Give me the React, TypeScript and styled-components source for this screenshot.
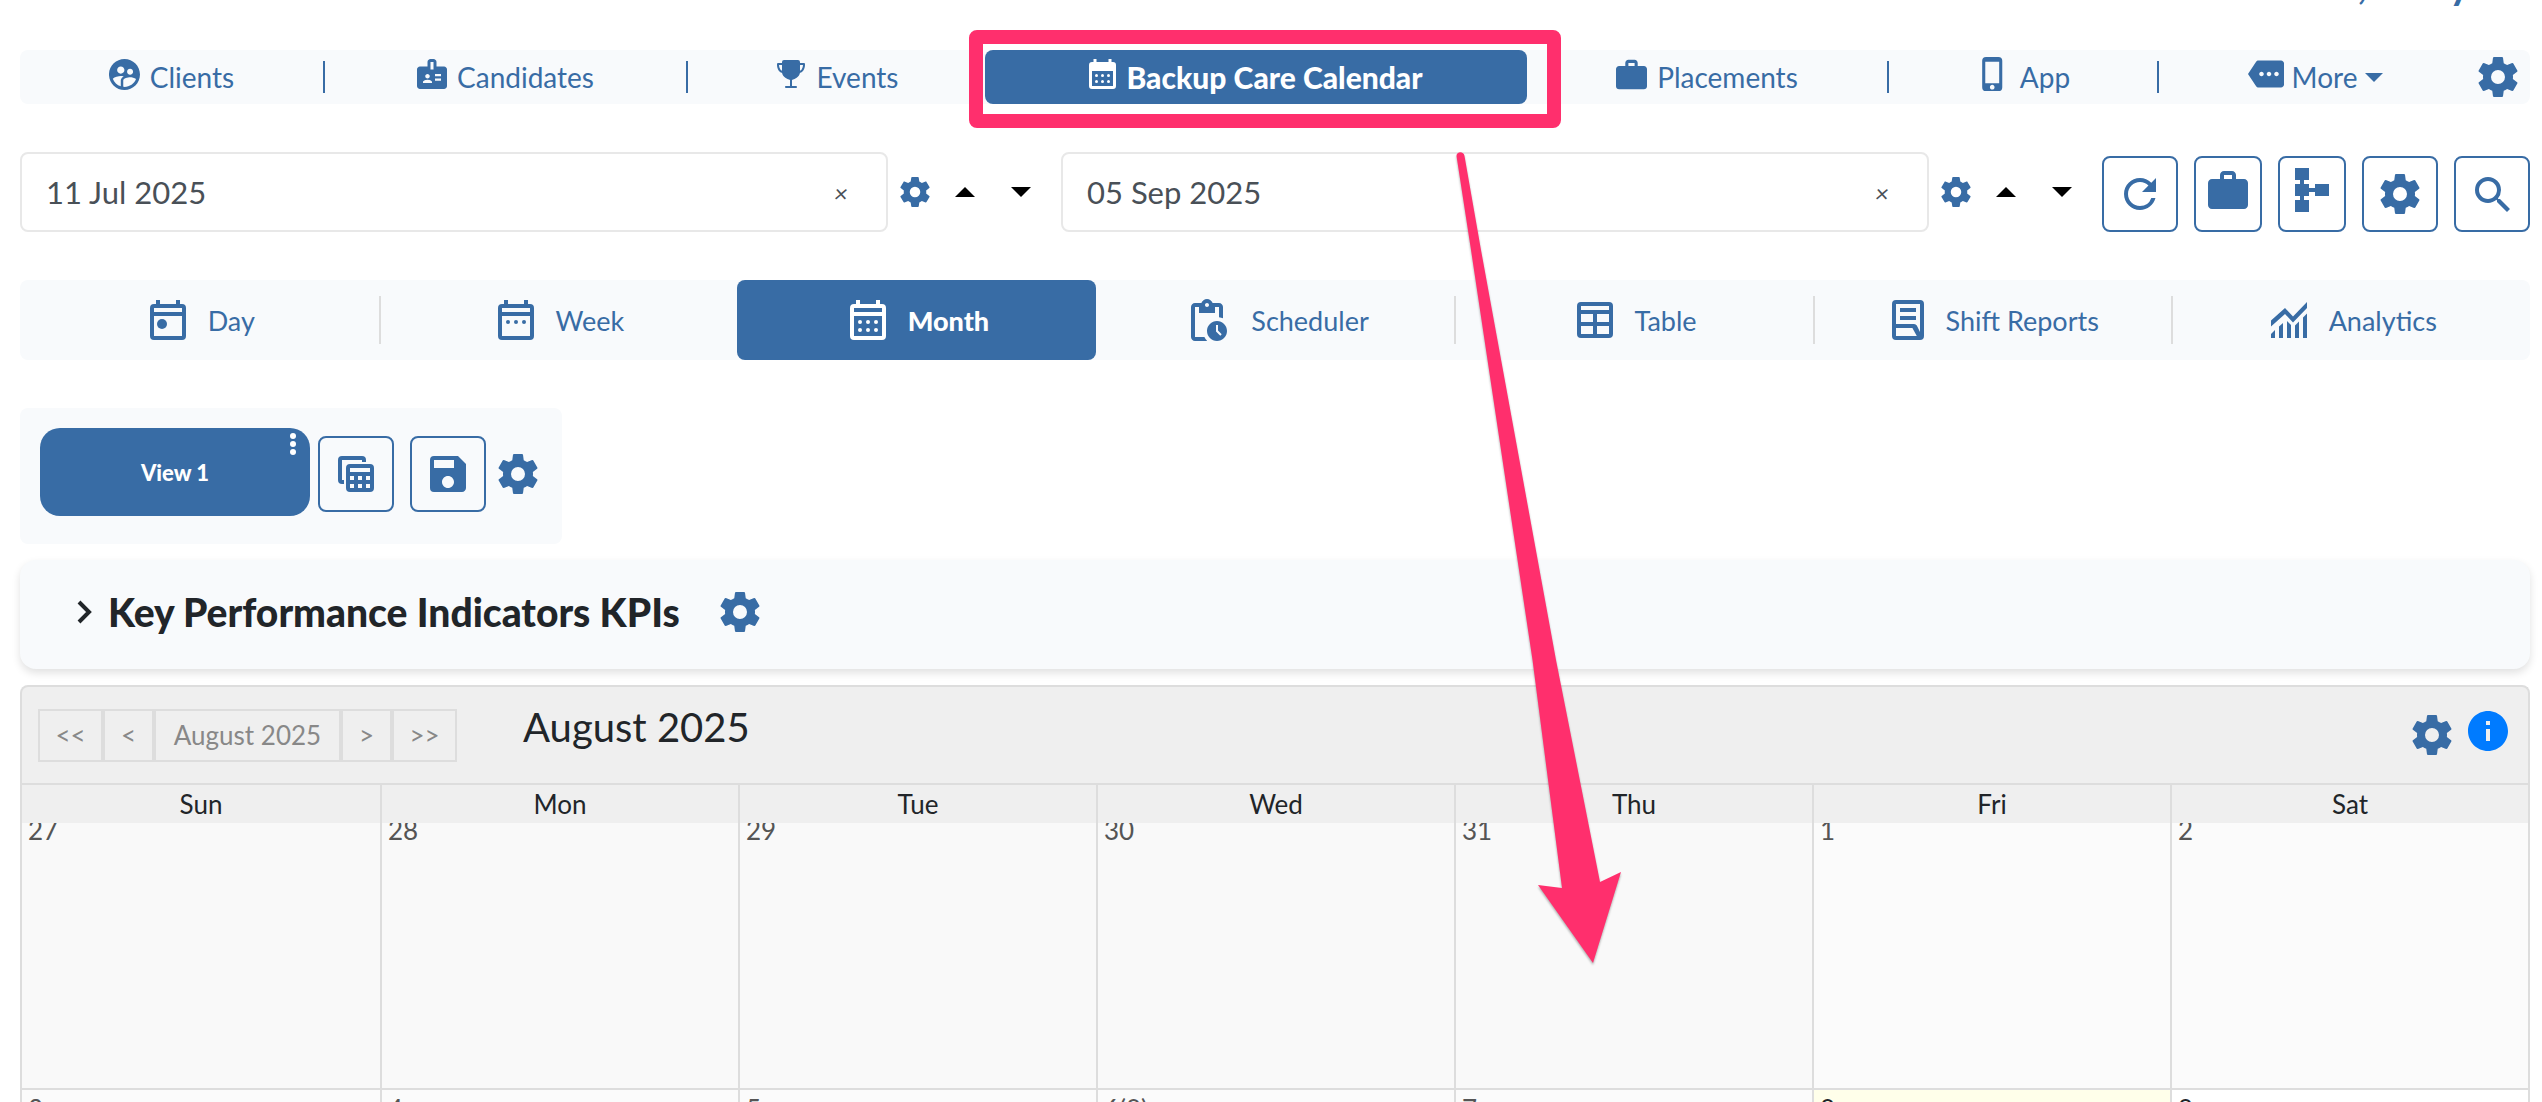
import React, { useEffect, useRef } from 'react';
import styled, { createGlobalStyle, css } from 'styled-components';
import {
  MdBadge,
  MdInfo,
  MdMore,
  MdOutlinePendingActions,
  MdPhoneIphone,
  MdRefresh,
  MdSave,
  MdSearch,
  MdSupervisedUserCircle,
  MdWork,
} from 'react-icons/md';
import { IoTrophy } from 'react-icons/io5';

const blue = '#386ca5';
const panel = '#f8fafc';
const line = '#dddddd';
const pink = '#ff2f6d';

const GlobalStyle = createGlobalStyle`
  * { box-sizing: border-box; }
  body {
    margin: 0;
    background: #fff;
    color: #212529;
    font-family: Lato, "Liberation Sans", sans-serif;
    font-size: 27px;
    overflow: hidden;
  }
  button, input { font: inherit; color: inherit; }
  svg { display: block; flex: none; }
`;

/* ---------- icons ---------- */

const Gear = ({ size = 40 }: { size?: number }) => (
  <svg width={size} height={size} viewBox="2 2 20 20" fill={blue} aria-hidden="true">
    <path d="M12 15.5A3.5 3.5 0 0 1 8.5 12 3.5 3.5 0 0 1 12 8.5a3.5 3.5 0 0 1 3.5 3.5 3.5 3.5 0 0 1-3.5 3.5m7.43-2.53c.04-.32.07-.64.07-.97s-.03-.66-.07-1l2.11-1.63c.19-.15.24-.42.12-.64l-2-3.46c-.12-.22-.39-.31-.61-.22l-2.49 1c-.52-.39-1.06-.73-1.69-.98l-.37-2.65A.506.506 0 0 0 14 2h-4c-.25 0-.46.18-.5.42l-.37 2.65c-.63.25-1.17.59-1.69.98l-2.49-1c-.22-.09-.49 0-.61.22l-2 3.46c-.13.22-.07.49.12.64L4.57 11c-.04.34-.07.67-.07 1s.03.65.07.97l-2.11 1.66c-.19.15-.25.42-.12.64l2 3.46c.12.22.39.3.61.22l2.49-1.01c.52.4 1.06.74 1.69.99l.37 2.65c.04.24.25.42.5.42h4c.25 0 .46-.18.5-.42l.37-2.65c.63-.26 1.17-.59 1.69-.99l2.49 1.01c.22.08.49 0 .61-.22l2-3.46c.12-.22.07-.49-.12-.64l-2.11-1.66Z" />
  </svg>
);

const CALENDAR_TABS = 'M16 0h-1v-2h-2v2H5v-2H3v2H2a2 2 0 0 0-2 2v14a2 2 0 0 0 2 2h14a2 2 0 0 0 2-2V2a2 2 0 0 0-2-2z';

const CalendarIcon = ({ kind, solid, w = 36, h = 40 }: { kind: 'day' | 'week' | 'month'; solid?: boolean; w?: number; h?: number }) => (
  <svg width={w} height={h} viewBox="0 -2 18 20" fill="currentColor" aria-hidden="true">
    <path fillRule="evenodd" d={`${CALENDAR_TABS}M16 16H2V6h14z${solid ? '' : 'M16 4H2V2h14z'}`} />
    {kind === 'day' && <circle cx="6" cy="10" r="2.5" />}
    {kind !== 'day' && [5, 9, 13].map((x) => <circle key={x} cx={x} cy="9" r="1" />)}
    {kind === 'month' && [5, 9, 13].map((x) => <circle key={x} cx={x} cy="13" r="1" />)}
  </svg>
);

const TableIcon = () => (
  <svg width="36" height="36" viewBox="0 0 18 18" fill="currentColor" aria-hidden="true">
    <path fillRule="evenodd" d="M2 0h14a2 2 0 0 1 2 2v14a2 2 0 0 1-2 2H2a2 2 0 0 1-2-2V2a2 2 0 0 1 2-2zM2 2v2h14V2zM2 6v4h6V6zM10 6v4h6V6zM2 12v4h6v-4zM10 12v4h6v-4z" />
  </svg>
);

const ReportIcon = () => (
  <svg width="32" height="40" viewBox="0 0 16 20" fill="currentColor" aria-hidden="true">
    <path fillRule="evenodd" d="M2 0h12a2 2 0 0 1 2 2v16a2 2 0 0 1-2 2H2a2 2 0 0 1-2-2V2a2 2 0 0 1 2-2zM2 2v10h9q1 0 1.4.8L14 16V2zM2 14v4h10.4L10.2 14z" />
    <path d="M4 4h8v2H4zM4 8h8v2H4z" />
  </svg>
);

const AnalyticsIcon = () => (
  <svg width="36" height="36" viewBox="0 0 18 18" fill="currentColor" aria-hidden="true">
    <path d="M0 9.2 7 3l4 4.300L18 0v3l-7 7.200-4-4.200-7 6.200z" />
    <path d="M0 16l2-2v4H0zM4 12.300l2-1.800V18H4zM8 9.500l2 2V18H8zM12 11.700l2-2V18h-2zM16 7.700l2-2V18h-2z" />
  </svg>
);

const CopyTableIcon = () => (
  <svg width="36" height="36" viewBox="0 0 18 18" fill="currentColor" aria-hidden="true">
    <path d="M0 2a2 2 0 0 1 2-2h10a2 2 0 0 1 2 2v1h-2V2H2v10h1v2H2a2 2 0 0 1-2-2z" />
    <path fillRule="evenodd" d="M6 4h10a2 2 0 0 1 2 2v10a2 2 0 0 1-2 2H6a2 2 0 0 1-2-2V6a2 2 0 0 1 2-2zM6 6v2h10V6zM6 10v2h2v-2zM10 10v2h2v-2zM14 10v2h2v-2zM6 14v2h2v-2zM10 14v2h2v-2zM14 14v2h2v-2z" />
  </svg>
);

const TreeIcon = () => (
  <svg width="34" height="44" viewBox="0 0 34 44" fill="currentColor" aria-hidden="true">
    <path d="M0 0h14v12H9v4h5v4h6v-4h14v12H20v-4h-6v4H9v4h5v12H0V32h5v-4H0V16h5v-4H0z" />
  </svg>
);

const Triangle = ({ down, w = 20, h = 10, color = '#000' }: { down?: boolean; w?: number; h?: number; color?: string }) => (
  <svg width={w} height={h} viewBox="0 0 20 10" preserveAspectRatio="none" fill={color} aria-hidden="true">
    <path d={down ? 'M0 0h20L10 10z' : 'M0 10h20L10 0z'} />
  </svg>
);

/* ---------- page ---------- */

const Page = styled.div`
  height: 100vh;
  display: flex;
  flex-direction: column;
  padding: 0 12px 0 20px;
  overflow: hidden;
`;

const Greeting = styled.header`
  flex: none;
  display: flex;
  align-items: flex-start;
  justify-content: flex-end;
  gap: 82px;
  height: 50px;
  padding-right: 60px;
  overflow: hidden;
  color: ${blue};
  font-size: 40px;
  font-weight: 700;
  line-height: 40px;
  span { margin-top: -36px; }
`;

const Nav = styled.nav`
  flex: none;
  display: flex;
  height: 54px;
  border-radius: 8px;
  background: ${panel};
`;

const NavItem = styled.div<{ $share: number; $divider?: boolean }>`
  position: relative;
  flex: ${(p) => p.$share} 1 0;
  display: flex;
  align-items: center;
  ${(p) =>
    p.$divider &&
    css`
      &::after {
        content: '';
        width: 2px;
        height: 32px;
        background: ${blue};
      }
    `}
`;

const NavLink = styled.a<{ $active?: boolean; $tight?: boolean }>`
  flex: 1;
  display: flex;
  align-items: center;
  justify-content: center;
  gap: ${(p) => (p.$tight ? 8 : 10)}px;
  padding-right: ${(p) => (p.$tight ? 6 : 0)}px;
  height: 100%;
  color: ${blue};
  font-size: 28px;
  text-decoration: none;
  white-space: nowrap;
  > svg:first-child { margin-bottom: 6px; }
  ${(p) =>
    p.$active &&
    css`
      background: ${blue};
      color: #fff;
      border-radius: 8px;
      font-size: 30px;
      font-weight: 900;
    `}
`;

const PlainButton = styled.button`
  flex: none;
  display: flex;
  align-items: center;
  justify-content: center;
  padding: 0;
  border: 0;
  background: none;
  color: #000;
`;

const NavGear = styled(PlainButton)`
  margin-right: 12px;
`;

const Highlight = styled.div`
  position: absolute;
  z-index: 5;
  inset: -20px -34px -24px -16px;
  border: 14px solid ${pink};
  border-radius: 8px;
  pointer-events: none;
`;

const Pointer = styled.svg`
  position: absolute;
  z-index: 6;
  left: 470px;
  top: 100px;
  filter: drop-shadow(0 2px 1px rgba(0, 0, 0, 0.3));
  pointer-events: none;
`;

const FilterRow = styled.div`
  flex: none;
  display: flex;
  align-items: center;
  margin-top: 48px;
`;

const DateGroup = styled.div`
  flex: 1;
  display: flex;
  align-items: center;
  padding-right: 30px;
`;

const DateBox = styled.div`
  flex: 1;
  display: flex;
  align-items: center;
  height: 80px;
  margin-right: 12px;
  padding: 0 38px 0 24px;
  border: 2px solid #e8e8e8;
  border-radius: 8px;
  color: #495057;
`;

const DateInput = styled.input`
  flex: 1;
  min-width: 0;
  padding: 0;
  border: 0;
  outline: 0;
  background: none;
  font-size: 31px;
`;

const ClearButton = styled(PlainButton)`
  color: #495057;
  font-size: 24px;
  font-style: italic;
`;

const Steps = styled.div`
  display: flex;
  gap: 36px;
  margin-left: 25px;
`;

const ToolGroup = styled.div`
  display: flex;
  gap: 16px;
  padding-top: 4px;
`;

const ToolButton = styled.button<{ $narrow?: boolean }>`
  flex: none;
  display: flex;
  align-items: center;
  justify-content: center;
  width: ${(p) => (p.$narrow ? 68 : 76)}px;
  height: 76px;
  padding: 0 0 ${(p) => (p.$narrow ? 8 : 0)}px;
  border: 2px solid ${blue};
  border-radius: 8px;
  background: transparent;
  color: ${blue};
`;

const Tabs = styled.div`
  flex: none;
  display: flex;
  height: 80px;
  margin-top: 48px;
  border-radius: 8px;
  background: ${panel};
`;

const Tab = styled.button<{ $active?: boolean; $divider?: boolean }>`
  flex: 1 1 0;
  display: flex;
  align-items: center;
  justify-content: center;
  gap: 22px;
  padding: 0 0 0 6px;
  border: 0;
  border-radius: ${(p) => (p.$active ? 8 : 0)}px;
  background: ${(p) =>
    p.$active ? blue : p.$divider ? `linear-gradient(${line}, ${line}) left center / 2px 48px no-repeat` : 'none'};
  color: ${(p) => (p.$active ? '#fff' : blue)};
  font-weight: ${(p) => (p.$active ? 900 : 400)};
`;

const Views = styled.section`
  flex: none;
  align-self: flex-start;
  display: flex;
  align-items: center;
  height: 136px;
  margin-top: 48px;
  padding: 0 24px 4px 20px;
  border-radius: 8px;
  background: ${panel};
`;

const ViewButton = styled.button`
  display: flex;
  align-items: center;
  justify-content: center;
  width: 270px;
  height: 88px;
  margin: 0 8px 4px 0;
  padding: 0;
  border: 0;
  border-radius: 20px;
  background: ${blue};
  color: #fff;
  font-size: 22px;
  font-weight: 900;
  position: relative;
`;

const Dots = styled.svg`
  position: absolute;
  top: 5px;
  right: 14px;
`;

const ViewTools = styled.div`
  display: flex;
  align-items: center;
  gap: 16px;
  margin-right: 12px;
`;

const Kpis = styled.section`
  flex: none;
  display: flex;
  align-items: center;
  height: 109px;
  margin-top: 16px;
  padding: 0 56px 6px;
  border-radius: 16px;
  background: ${panel};
  box-shadow: 0 4px 8px rgba(0, 0, 0, 0.12);
`;

const KpiToggle = styled(PlainButton)`
  gap: 16px;
  margin-right: 40px;
  color: #212529;
  font-size: 39px;
  font-weight: 900;
  line-height: 40px;
`;

const Calendar = styled.section`
  flex: 1;
  min-height: 0;
  display: flex;
  flex-direction: column;
  margin-top: 16px;
  border: 2px solid ${line};
  border-bottom: 0;
  border-radius: 8px 8px 0 0;
  background: #efefef;
`;

const CalendarBar = styled.div`
  flex: none;
  display: flex;
  align-items: center;
  height: 98px;
  padding: 0 20px 0 16px;
  border-bottom: 2px solid ${line};
`;

const Pager = styled.div`
  display: flex;
`;

const PagerButton = styled.button<{ $width: number }>`
  width: ${(p) => p.$width}px;
  height: 53px;
  padding: 0;
  border: 2px solid ${line};
  background: none;
  color: #888;
  font-size: 26px;
`;

const MonthTitle = styled.h2`
  flex: 1;
  margin: 0 0 16px 66px;
  font-size: 40px;
  font-weight: 400;
  line-height: 48px;
`;

const InfoButton = styled(PlainButton)`
  margin: 0 0 8px 16px;
  color: #007bff;
`;

const Scroller = styled.div`
  flex: 1;
  min-height: 0;
  overflow: auto;
  scrollbar-width: none;
`;

const MonthTable = styled.table`
  width: 100%;
  table-layout: fixed;
  border-collapse: separate;
  border-spacing: 0;
  th + th, td + td { border-left: 2px solid ${line}; }
`;

const DayName = styled.th`
  position: sticky;
  top: 0;
  height: 38px;
  padding: 0;
  background: #efefef;
  font-size: 26px;
  font-weight: 400;
  line-height: 38px;
`;

const DayCell = styled.td<{ $bg: string; $ink?: string }>`
  height: 279px;
  padding: 2px 6px;
  border-bottom: 2px solid ${line};
  background: ${(p) => p.$bg};
  color: ${(p) => p.$ink ?? '#555'};
  font-size: 26px;
  line-height: 34px;
  vertical-align: top;
`;

const muted = '#f9f9f9';
const past = '#fbfbfb';
const weeks = [
  [['27', muted], ['28', muted], ['29', muted], ['30', muted], ['31', muted], ['1', past], ['2', past]],
  [['3', past], ['4', past], ['5', past], ['6(8)', past], ['7', past], ['8', '#ffffea', '#212529'], ['9', '#ffffff', '#212529']],
];

const DateField = ({ label, value }: { label: string; value: string }) => (
  <DateGroup>
    <DateBox>
      <DateInput aria-label={label} defaultValue={value} />
      <ClearButton aria-label={`Clear ${label}`}>×</ClearButton>
    </DateBox>
    <PlainButton aria-label={`${label} settings`}><Gear size={30} /></PlainButton>
    <Steps>
      <PlainButton aria-label="Next day"><Triangle /></PlainButton>
      <PlainButton aria-label="Previous day"><Triangle down /></PlainButton>
    </Steps>
  </DateGroup>
);

export default function App() {
  const scroller = useRef<HTMLDivElement>(null);
  useEffect(() => {
    if (scroller.current) scroller.current.scrollTop = 12;
  }, []);

  return (
    <>
      <GlobalStyle />
      <Page>
        <Greeting><span>,</span><span>y</span></Greeting>

        <Nav>
          <NavItem $share={305} $divider>
            <NavLink href="#clients"><MdSupervisedUserCircle size={31} viewBox="2 2 20 20" />Clients</NavLink>
          </NavItem>
          <NavItem $share={363} $divider>
            <NavLink href="#candidates"><MdBadge size={30} viewBox="2 2 20 20" />Candidates</NavLink>
          </NavItem>
          <NavItem $share={297}>
            <NavLink href="#events"><IoTrophy size={32} />Events</NavLink>
          </NavItem>
          <NavItem $share={542}>
            <NavLink href="#calendar" $active><CalendarIcon kind="month" solid w={27} h={30} />Backup Care Calendar</NavLink>
            <Highlight />
            <Pointer width="170" height="820" viewBox="1455 150 170 820">
              <path fill={pink} d="M1456.500 156C1456.500 151 1464 151 1464.500 156L1481 250L1556 660L1600 882L1621 872L1593 963L1538 885L1562 888L1532.500 660L1471 250Z" />
            </Pointer>
          </NavItem>
          <NavItem $share={362} $divider>
            <NavLink href="#placements"><MdWork size={31} viewBox="2 2 20 19" />Placements</NavLink>
          </NavItem>
          <NavItem $share={270} $divider>
            <NavLink href="#app"><MdPhoneIphone size={34} viewBox="1 1 22 22" />App</NavLink>
          </NavItem>
          <NavItem $share={319}>
            <NavLink href="#more" $tight>
              <MdMore size={36} />More<Triangle down w={18} h={9} color={blue} />
            </NavLink>
          </NavItem>
          <NavGear aria-label="Navigation settings"><Gear /></NavGear>
        </Nav>

        <FilterRow>
          <DateField label="Start date" value="11 Jul 2025" />
          <DateField label="End date" value="05 Sep 2025" />
          <ToolGroup>
            <ToolButton aria-label="Refresh"><MdRefresh size={32} viewBox="4 4 16 16" /></ToolButton>
            <ToolButton $narrow aria-label="Placements"><MdWork size={40} viewBox="2 2 20 19" /></ToolButton>
            <ToolButton $narrow aria-label="Hierarchy"><TreeIcon /></ToolButton>
            <ToolButton aria-label="Settings"><Gear /></ToolButton>
            <ToolButton aria-label="Search"><MdSearch size={35} viewBox="3 3 17.5 17.5" /></ToolButton>
          </ToolGroup>
        </FilterRow>

        <Tabs>
          <Tab><CalendarIcon kind="day" />Day</Tab>
          <Tab $divider><CalendarIcon kind="week" />Week</Tab>
          <Tab $active><CalendarIcon kind="month" />Month</Tab>
          <Tab><MdOutlinePendingActions size={42} viewBox="2 1 21 21" />Scheduler</Tab>
          <Tab $divider><TableIcon />Table</Tab>
          <Tab $divider><ReportIcon />Shift Reports</Tab>
          <Tab $divider><AnalyticsIcon />Analytics</Tab>
        </Tabs>

        <Views>
          <ViewButton>
            View 1
            <Dots width="6" height="22" viewBox="0 0 6 22" fill="#fff" aria-hidden="true">
              <circle cx="3" cy="3" r="3" />
              <circle cx="3" cy="11" r="3" />
              <circle cx="3" cy="19" r="3" />
            </Dots>
          </ViewButton>
          <ViewTools>
            <ToolButton aria-label="Duplicate view"><CopyTableIcon /></ToolButton>
            <ToolButton aria-label="Save view"><MdSave size={36} viewBox="3 3 18 18" /></ToolButton>
          </ViewTools>
          <PlainButton aria-label="View settings"><Gear /></PlainButton>
        </Views>

        <Kpis>
          <KpiToggle>
            <svg width="16" height="24" viewBox="0 0 16 24" fill="none" stroke="#212529" strokeWidth="4" aria-hidden="true">
              <path d="M3 2l10 10L3 22" />
            </svg>
            Key Performance Indicators KPIs
          </KpiToggle>
          <PlainButton aria-label="KPI settings"><Gear /></PlainButton>
        </Kpis>

        <Calendar>
          <CalendarBar>
            <Pager>
              <PagerButton $width={65}>&lt;&lt;</PagerButton>
              <PagerButton $width={51}>&lt;</PagerButton>
              <PagerButton $width={187}>August 2025</PagerButton>
              <PagerButton $width={51}>&gt;</PagerButton>
              <PagerButton $width={65}>&gt;&gt;</PagerButton>
            </Pager>
            <MonthTitle>August 2025</MonthTitle>
            <PlainButton aria-label="Calendar settings"><Gear /></PlainButton>
            <InfoButton aria-label="Information"><MdInfo size={40} viewBox="2 2 20 20" /></InfoButton>
          </CalendarBar>
          <Scroller ref={scroller}>
            <MonthTable>
              <thead>
                <tr>
                  {['Sun', 'Mon', 'Tue', 'Wed', 'Thu', 'Fri', 'Sat'].map((d) => (
                    <DayName key={d} scope="col">{d}</DayName>
                  ))}
                </tr>
              </thead>
              <tbody>
                {weeks.map((week) => (
                  <tr key={week[0][0]}>
                    {week.map(([day, bg, ink]) => (
                      <DayCell key={day} $bg={bg} $ink={ink}>{day}</DayCell>
                    ))}
                  </tr>
                ))}
              </tbody>
            </MonthTable>
          </Scroller>
        </Calendar>
      </Page>
    </>
  );
}
